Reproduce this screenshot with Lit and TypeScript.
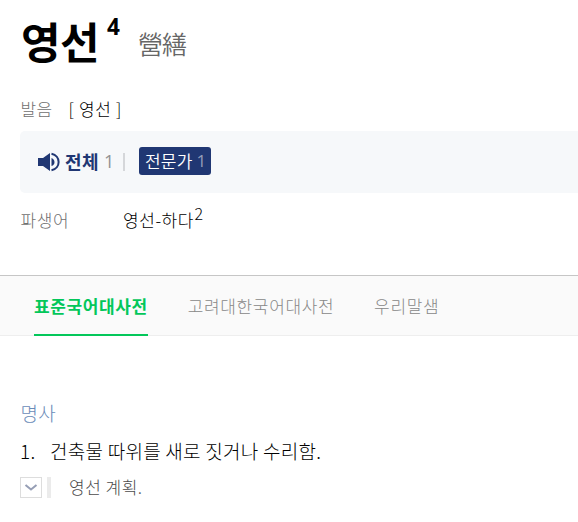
import { LitElement, html, css } from "lit";
import { customElement, property, state } from "lit/decorators.js";
import { classMap } from "lit/directives/class-map.js";

@customElement("word-header")
class WordHeader extends LitElement {
  static styles = css`
    :host { display: block; }
    .title { display: flex; height: 85px; padding-left: 21px; box-sizing: border-box; white-space: nowrap; }
    .word { font-size: 43px; font-weight: 700; line-height: 81px; letter-spacing: -.6px; width: 86px; }
    .num { font: 700 22.5px/53px "Open Sans", sans-serif; width: 31px; }
    .hanja { font-size: 25px; font-weight: 350; color: #666; line-height: 86px; letter-spacing: -1px; }
    .row { display: flex; align-items: center; height: 46px; padding: 0 0 0 20.5px; font-size: 17px; font-weight: 300; box-sizing: border-box; white-space: nowrap; }
    .label { color: #707070; width: 48px; letter-spacing: .4px; }
    .pron { letter-spacing: .4px; word-spacing: .7px; }
  `;
  render() {
    return html`
      <div class="title"><span class="word">영선</span><span class="num">4</span><span class="hanja">營繕</span></div>
      <div class="row"><span class="label">발음</span><span class="pron">[ 영선 ]</span></div>
    `;
  }
}

@customElement("audio-bar")
class AudioBar extends LitElement {
  static styles = css`
    :host { display: flex; align-items: center; height: 62px; margin-left: 20px; padding: 0 0 2px 17px; box-sizing: border-box; background: #f6f8fa; border-radius: 5px 0 0 5px; font-size: 18px; white-space: nowrap; }
    svg { display: block; width: 24px; height: 20px; margin: 2px 4px 0 0; }
    .all { color: #203773; font-weight: 700; width: 39px; letter-spacing: .4px; }
    .count { font: 400 18px "Open Sans", sans-serif; color: #929294; width: 19px; }
    .bar { width: 2px; height: 18px; background: #d5d7da; margin: 2px 14px 0 0; }
    .pro { display: flex; align-items: center; width: 72px; height: 28px; padding: 0 0 1px 6px; box-sizing: border-box; border-radius: 3px; background: #203773; color: #fff; font-size: 17px; font-weight: 350; letter-spacing: .2px; }
    .pro .n { font: 400 17px "Open Sans", sans-serif; color: #929cb9; margin-left: 4px; }
  `;
  render() {
    return html`
      <svg viewBox="0 0 24 20" fill="#203773">
        <path d="M1 6h5l7-5v18l-7-5H1z" />
        <path d="M14.5 6c4 1.5 4 7 0 8z" />
        <path d="M14.5 1.8c9.5 2 9.500 14.400 0 16.400" fill="none" stroke="#203773" stroke-width="2" />
      </svg>
      <span class="all">전체</span><span class="count">1</span><span class="bar"></span>
      <span class="pro"><span>전문가</span><span class="n">1</span></span>
    `;
  }
}

@customElement("dict-tabs")
class DictTabs extends LitElement {
  @property({ attribute: false }) tabs: string[] = [];
  @state() private active = 0;
  static styles = css`
    :host { display: flex; height: 61px; box-sizing: border-box; padding-left: 34px; gap: 39.9px; background: #fafafa; border-top: 1px solid #c6c6c6; border-bottom: 1px solid #eee; }
    .tab { height: 60px; box-sizing: border-box; font-size: 17px; line-height: 59px; color: #888; font-weight: 300; letter-spacing: .63px; white-space: nowrap; cursor: pointer; }
    .on { color: #03c75a; font-weight: 700; border-bottom: 2px solid #03c75a; }
  `;
  render() {
    return this.tabs.map((t, i) => html`<div class=${classMap({ tab: true, on: i === this.active })} @click=${() => (this.active = i)}>${t}</div>`);
  }
}

@customElement("app-root")
class AppRoot extends LitElement {
  static styles = css`
    :host { display: block; height: 522px; overflow: hidden; background: #fff; color: #000; font-family: "Noto Sans CJK KR", "Noto Sans", sans-serif; }
    .derived { display: flex; height: 82px; box-sizing: border-box; padding: 14px 0 0 20.5px; font-size: 17px; font-weight: 300; line-height: 26px; white-space: nowrap; letter-spacing: .55px; }
    .label { color: #707070; width: 102.5px; }
    .sup { font-size: 16px; line-height: 13px; margin-left: .5px; }
    .pos { padding: 61px 0 0 20.5px; font-size: 19px; line-height: 32px; font-weight: 300; color: #6a8bb8; letter-spacing: .3px; }
    .sense { display: flex; padding-left: 20px; margin-top: 6px; font-size: 19px; line-height: 32px; font-weight: 300; white-space: nowrap; letter-spacing: .26px; }
    .idx { width: 30px; }
    .example { display: flex; align-items: center; height: 22px; margin-top: 9px; padding-left: 20px; font-size: 17px; font-weight: 300; color: #4c4c4c; white-space: nowrap; letter-spacing: .5px; }
    .example .text { margin-top: -2px; }
    .toggle { width: 22px; height: 21px; box-sizing: border-box; border: 1px solid #ddd; display: block; }
    .rule { width: 4px; height: 21px; background: #ebebeb; margin: 0 18px 0 5px; }
  `;
  render() {
    return html`
      <word-header></word-header>
      <audio-bar></audio-bar>
      <div class="derived"><span class="label">파생어</span><span>영선-하다</span><span class="sup">2</span></div>
      <dict-tabs .tabs=${["표준국어대사전", "고려대한국어대사전", "우리말샘"]}></dict-tabs>
      <div class="pos">명사</div>
      <div class="sense"><span class="idx">1.</span><span>건축물 따위를 새로 짓거나 수리함.</span></div>
      <div class="example">
        <svg class="toggle" viewBox="0 0 20 19" fill="none" stroke="#969eb5" stroke-width="2"><path d="M4.500 7l5.500 4.500 5.500-4.500" /></svg>
        <span class="rule"></span><span class="text">영선 계획.</span>
      </div>
    `;
  }
}
